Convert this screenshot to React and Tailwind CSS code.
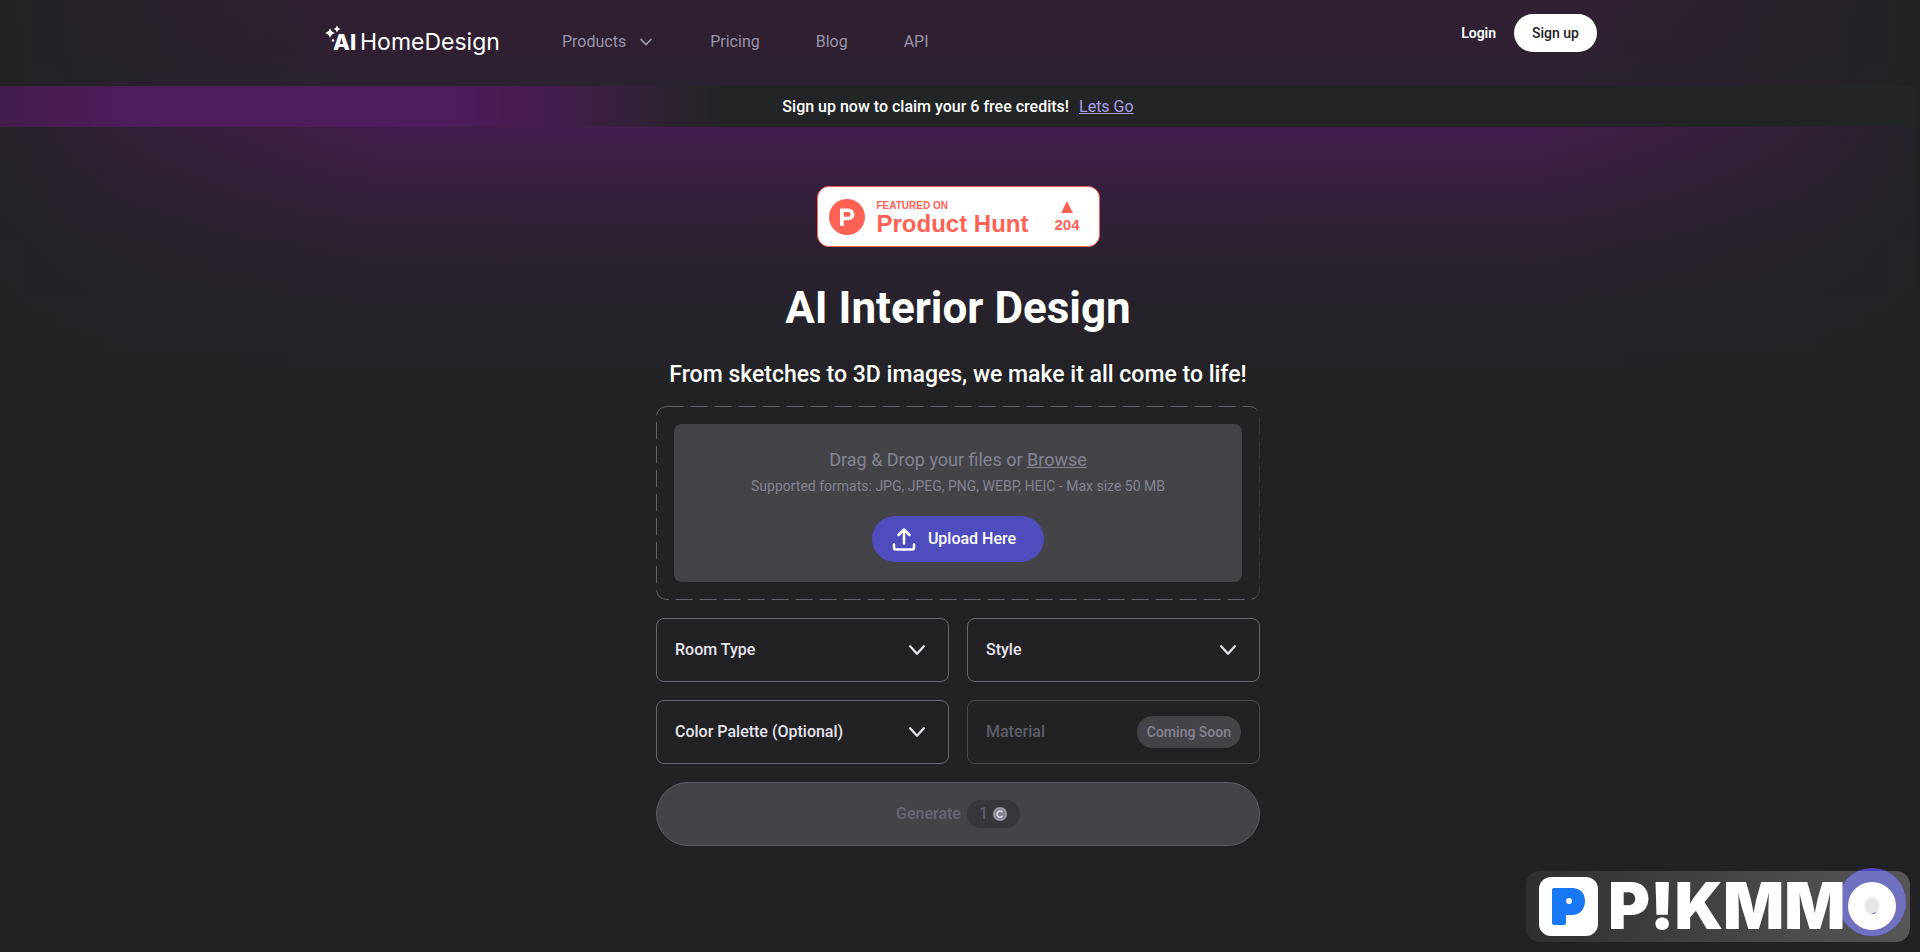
import React, { useState } from "react";

const navLinks = ["Pricing", "Blog", "API"];

const Chevron = ({ className }) => (
  <svg viewBox="0 0 24 24" fill="none" stroke="currentColor" strokeWidth="2.5" strokeLinecap="round" strokeLinejoin="round" className={className} aria-hidden="true">
    <path d="M4.500 8 12 16l7.500-8" />
  </svg>
);

const Logo = () => (
  <svg viewBox="0 0 180 36" className="h-9 w-[180px] shrink-0" fill="#fff" role="img" aria-label="AI HomeDesign">
    <path d="M6 4q1 4 5 5-4 1-5 5-1-4-5-5 4-1 5-5z" />
    <path d="M13 1.500q.7 2.800 3.500 3.500-2.800.7-3.500 3.500-.7-2.800-3.500-3.500 2.800-.7 3.500-3.500z" />
    <circle cx="9" cy="16.500" r="1.300" />
    <text x="9" y="26" fontSize="22" fontWeight="800" fontFamily="Inter, sans-serif">AI</text>
    <text x="36" y="26" fontSize="23" fontFamily="Inter, sans-serif">HomeDesign</text>
  </svg>
);

const Header = () => (
  <header className="bg-[linear-gradient(90deg,#222224_0%,#22222480_8%,#22222400_18%,#22222400_82%,#22222480_92%,#222224_100%),linear-gradient(180deg,#302032_0%,#2e2031_60%,#2a2230_100%)]">
    <div className="mx-auto flex h-[86px] w-full max-w-[1278px] items-start pl-[5px]">
      <a href="#home" className="mt-6"><Logo /></a>
      <nav className="mt-[30px] ml-[58px] flex items-center gap-14 text-base text-[#9a94a8]">
        <button type="button" className="flex items-center gap-3">
          Products
          <Chevron className="size-4" />
        </button>
        {navLinks.map((link) => (
          <a key={link} href={`#${link.toLowerCase()}`}>{link}</a>
        ))}
      </nav>
      <div className="mt-3.5 ml-auto flex items-center gap-[18px] text-sm font-medium">
        <a href="#login" className="font-semibold">Login</a>
        <a href="#signup" className="flex h-[38px] items-center rounded-full bg-white px-[18px] text-[#222224]">Sign up</a>
      </div>
    </div>
  </header>
);

const Banner = () => (
  <div className="flex h-[41px] items-center justify-center gap-2.5 bg-[linear-gradient(90deg,#421d4b_0%,#4f1c5c_7%,#4e1c5d_23%,#431d4c_29%,#2c2230_35%,#232425_38%)] text-base font-medium">
    <span>Sign up now to claim your 6 free credits!</span>
    <a href="#signup" className="font-normal text-[#aba0e8] underline">Lets Go</a>
  </div>
);

const ProductHuntBadge = () => (
  <a href="#producthunt" className="flex h-[61px] w-[283px] items-center rounded-xl border border-[#ff6154] bg-white pl-[11px] font-['Liberation_Sans',sans-serif] font-bold text-[#ff6154]">
    <svg viewBox="0 0 36 36" className="size-9" aria-hidden="true">
      <circle cx="18" cy="18" r="18" fill="#ff6154" />
      <path fill="#fff" fillRule="evenodd" d="M11 9.500h8.500a5.900 5.900 0 0 1 0 11.800h-4.800V27H11zM14.700 13v4.800h4.600a2.400 2.400 0 0 0 0-4.800z" />
    </svg>
    <span className="ml-3 flex flex-col pt-0.5">
      <span className="text-[10px] leading-3">FEATURED ON</span>
      <span className="text-2xl leading-6">Product Hunt</span>
    </span>
    <span className="ml-[26px] flex flex-col items-center gap-1">
      <svg viewBox="0 0 12 12" className="size-3" fill="currentColor" aria-hidden="true">
        <path d="M6 0l6 12H0z" />
      </svg>
      <span className="text-[15px] leading-4">204</span>
    </span>
  </a>
);

const Dropzone = () => {
  const [fileName, setFileName] = useState("");

  return (
    <div className="relative p-[18px]">
      <svg className="absolute inset-0 size-full" aria-hidden="true">
        <defs>
          <linearGradient id="dash">
            <stop offset="0.99" stopColor="#62616b" />
            <stop offset="1" stopColor="#37363b" />
          </linearGradient>
        </defs>
        <rect x="0.5" y="0.5" rx="10" className="h-[calc(100%-1px)] w-[calc(100%-1px)]" fill="none" stroke="url(#dash)" strokeDasharray="17 7" />
      </svg>
      <div className="relative flex h-[158px] flex-col items-center rounded-lg bg-[#434348] pt-6 text-[#858390]">
        <label htmlFor="file" className="text-lg leading-6">
          Drag &amp; Drop your files or <span className="underline">Browse</span>
        </label>
        <p className="mt-1 text-sm leading-5">Supported formats: JPG, JPEG, PNG, WEBP, HEIC - Max size 50 MB</p>
        <label htmlFor="file" className="mt-5 flex h-[46px] cursor-pointer items-center gap-3 rounded-full bg-[#4f4dbe] pr-7 pl-5 text-base font-medium text-white">
          <svg viewBox="0 0 24 24" className="size-6" fill="none" stroke="currentColor" strokeWidth="2.5" strokeLinecap="round" strokeLinejoin="round" aria-hidden="true">
            <path d="M12 16.500V2.500M6.500 8 12 2.500 17.500 8M2 17.500v3q0 2 2 2h16q2 0 2-2v-3" />
          </svg>
          {fileName || "Upload Here"}
        </label>
        <input id="file" type="file" className="sr-only" onChange={(e) => setFileName(e.target.files[0]?.name ?? "")} />
      </div>
    </div>
  );
};

const SelectBox = ({ label }) => (
  <div className="relative h-16 rounded-lg border border-[#686673]">
    <select aria-label={label} className="size-full appearance-none bg-transparent px-[18px] text-base font-medium text-[#e6e4ec] outline-none">
      <option>{label}</option>
    </select>
    <Chevron className="pointer-events-none absolute top-5 right-5 size-[22px] text-[#e6e4ec]" />
  </div>
);

const Watermark = () => (
  <div className="fixed right-2.5 bottom-2.5 h-[71px] w-96">
    <svg viewBox="0 0 384 71" className="size-full overflow-visible" role="img" aria-label="P!KMMO">
      <defs>
        <linearGradient id="plate">
          <stop offset="0" stopColor="#303032" />
          <stop offset="1" stopColor="#565656" />
        </linearGradient>
        <clipPath id="plateClip">
          <rect width="384" height="71" rx="14" />
        </clipPath>
      </defs>
      <rect width="384" height="71" rx="14" fill="url(#plate)" />
      <circle cx="346" cy="31" r="34" fill="#4f4dbe" />
      <circle cx="346" cy="31" r="34" fill="#706fc0" clipPath="url(#plateClip)" />
      <rect x="13" y="6" width="59" height="59" rx="12" fill="#fff" />
      <path fill="#1877f2" fillRule="evenodd" d="M28 17h18c8 0 13 5 13 13s-5 14-13 14h-6v8q0 2-2 2H28q-2 0-2-2V19q0-2 2-2zM43 27a3 3 0 1 0 0 6 3 3 0 0 0 0-6z" />
      <text x="82" y="58" fontSize="64" fontWeight="900" fontFamily="Inter, sans-serif" fill="#fff">P!KMM</text>
      <circle cx="346" cy="35" r="24" fill="#fff" />
      <ellipse cx="346" cy="35" rx="7.500" ry="8.500" fill="#e6e6e6" />
      <path d="M345.500 43q3 .5 5-1.500-3-.3-5 1.500z" fill="#4f4dbe" />
    </svg>
  </div>
);

const App = () => {
  return (
    <div className="flex min-h-screen flex-col bg-[#222224] pr-1 font-[Roboto,sans-serif] text-white">
      <Header />
      <Banner />
      <main className="flex flex-1 flex-col items-center bg-[linear-gradient(90deg,#222224e0_0%,#22222480_7%,#22222400_20%,#22222400_80%,#22222480_93%,#222224e0_100%),linear-gradient(180deg,#431d4c_0px,#3b1e43_40px,#32203a_80px,#2c2130_120px,#26222a_180px,#222224_260px)] px-4 pt-[59px] pb-24">
        <ProductHuntBadge />
        <h1 className="mt-[33px] text-[44px] leading-[56px] font-bold">AI Interior Design</h1>
        <h2 className="mt-[23px] text-[23px] leading-8 font-medium">From sketches to 3D images, we make it all come to life!</h2>
        <form className="mt-[15px] flex w-full max-w-[604px] flex-col gap-[18px]" onSubmit={(e) => e.preventDefault()}>
          <Dropzone />
          <div className="grid grid-cols-2 gap-[18px]">
            <SelectBox label="Room Type" />
            <SelectBox label="Style" />
            <SelectBox label="Color Palette (Optional)" />
            <div className="flex h-16 items-center justify-between rounded-lg border border-[#4b4a53] px-[18px] text-base font-medium text-[#5f5d69]">
              Material
              <span className="flex h-8 items-center rounded-full bg-[#434348] px-2.5 text-sm text-[#858390]">Coming Soon</span>
            </div>
          </div>
          <button type="submit" disabled className="flex h-16 items-center justify-center gap-1.5 rounded-full border border-[#5f5d69] bg-[#434348] text-base font-medium text-[#686673]">
            Generate
            <span className="flex h-7 items-center gap-1 rounded-full bg-[#37363b] px-3 font-normal">
              1
              <svg viewBox="0 0 16 16" className="size-4" aria-hidden="true">
                <circle cx="8" cy="8" r="7" fill="#9d9ba8" />
                <circle cx="8" cy="8" r="5.300" fill="#858390" />
                <path d="M10.500 6.300a3 3 0 1 0 0 3.400" fill="none" stroke="#dddbe6" strokeWidth="1.600" />
              </svg>
            </span>
          </button>
        </form>
      </main>
      <Watermark />
    </div>
  );
};

export default App;
